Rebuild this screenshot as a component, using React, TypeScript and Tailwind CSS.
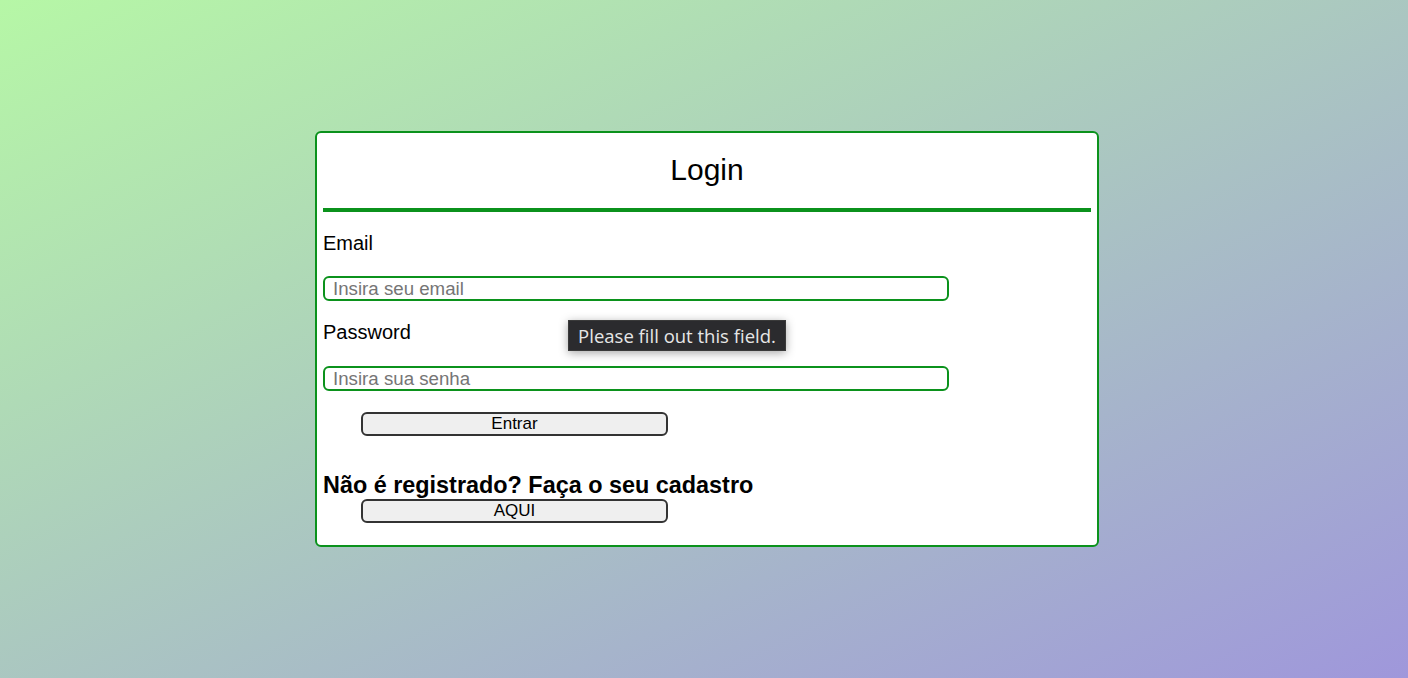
import React from "react";

export default function App() {
  return (
    <div
      className="w-[1408px] h-[678px] flex items-center justify-center pl-[6px] bg-[linear-gradient(to_bottom_right,#b6f7a6,#9f97db)]"
      style={{ fontFamily: '"Liberation Sans", Arial, sans-serif' }}
    >
      <div className="relative w-[784px] h-[416px] bg-white border-2 border-[#0b921c] rounded-[6px] px-[6px] pt-[20px] text-black">
        <h1 className="text-[30px] leading-[34px] text-center">Login</h1>
        <div className="mt-[21px] h-[4px] bg-[#0b921c]" />
        <div className="mt-[20px] text-[20px] leading-[23px]">Email</div>
        <div className="mt-[21px] w-[626px] h-[25px] border-2 border-[#0b921c] rounded-[6px] flex items-center px-[8px] pt-[2px] text-[18.7px] text-[#757575]">
          Insira seu email
        </div>
        <div className="mt-[20px] text-[20px] leading-[23px]">Password</div>
        <div className="mt-[22px] w-[626px] h-[25px] border-2 border-[#0b921c] rounded-[6px] flex items-center px-[8px] pt-[2px] text-[18.7px] text-[#757575]">
          Insira sua senha
        </div>
        <div className="mt-[21px] ml-[38px] w-[307px] h-[24px] border-2 border-[#333] rounded-[6px] bg-[#efefef] flex items-center justify-center text-[17px]">
          Entrar
        </div>
        <div className="mt-[36px] text-[23.4px] leading-[27px] font-bold">
          Não é registrado? Faça o seu cadastro
        </div>
        <div className="mt-0 ml-[38px] w-[307px] h-[24px] border-2 border-[#333] rounded-[6px] bg-[#efefef] flex items-center justify-center text-[17px]">
          AQUI
        </div>
        <div
          className="absolute left-[251px] top-[187px] w-[218px] h-[31px] flex items-center justify-center bg-[#2b2b2e] text-[#e6e6e6] text-[18.5px] shadow-[0_2px_10px_rgba(0,0,0,0.35)] border border-[#3a3a3a]"
          style={{ fontFamily: '"Open Sans", "DejaVu Sans", sans-serif' }}
        >
          Please fill out this field.
        </div>
      </div>
    </div>
  );
}
